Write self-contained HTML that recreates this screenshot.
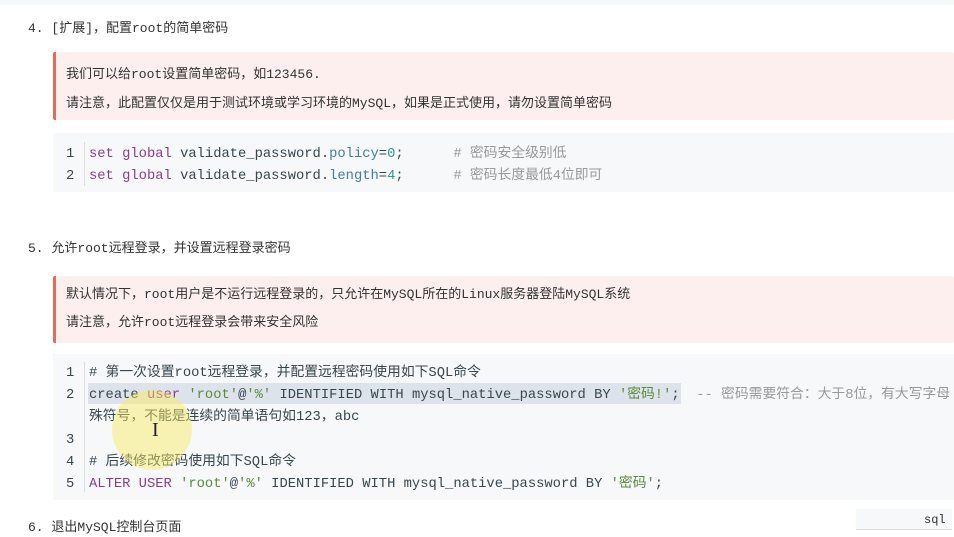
<!DOCTYPE html>
<html><head><meta charset="utf-8"><style>
*{margin:0;padding:0;box-sizing:border-box}
body{width:954px;height:532px;overflow:hidden;background:#fff;position:relative;font-family:"Liberation Mono","Noto Sans CJK SC",monospace;color:#333;font-size:13px}
.a{position:absolute;white-space:pre;line-height:18px;margin-top:3px}
.b{margin-top:0}
.call{position:absolute;left:53px;width:901px;background:#fdefee;border-left:3px solid #e06c5e;border-radius:2px}
.code{position:absolute;left:53px;width:901px;background:#f6f8fa}
.ln{color:#999}
.k{color:#8e3c92}.p{color:#3d7fa8}.n{color:#2a9d8f}.s{color:#5a8a3a}.c{color:#999}.t{color:#37474f}
.cd{font-size:13.8px;color:#37474f}
.sep{position:absolute;left:84px;width:1px;background:#ddd}
</style></head><body>
<div class="a b" style="left:0;top:0;width:954px;height:5px;background:#f7f8fa"></div>
<div class="a" style="left:28px;top:17px">4. [扩展]，配置root的简单密码</div>
<div class="call" style="top:52px;height:68px"></div>
<div class="a" style="left:66px;top:63px">我们可以给root设置简单密码，如123456.</div>
<div class="a" style="left:66px;top:92px">请注意，此配置仅仅是用于测试环境或学习环境的MySQL，如果是正式使用，请勿设置简单密码</div>
<div class="code" style="top:133px;height:59px"></div>
<div class="sep" style="top:142px;height:44px"></div>
<div class="a ln cd" style="left:66px;top:143px">1</div>
<div class="a ln cd" style="left:66px;top:165px">2</div>
<div class="a cd" style="left:89px;top:143px"><span class="k">set global</span> validate_password.<span class="p">policy</span>=<span class="n">0</span>;      <span class="c"># 密码安全级别低</span></div>
<div class="a cd" style="left:89px;top:165px"><span class="k">set global</span> validate_password.<span class="p">length</span>=<span class="n">4</span>;      <span class="c"># 密码长度最低4位即可</span></div>
<div class="a" style="left:28px;top:237px">5. 允许root远程登录，并设置远程登录密码</div>
<div class="call" style="top:276px;height:67px"></div>
<div class="a" style="left:66px;top:283px">默认情况下，root用户是不运行远程登录的，只允许在MySQL所在的Linux服务器登陆MySQL系统</div>
<div class="a" style="left:66px;top:311px">请注意，允许root远程登录会带来安全风险</div>
<div class="code" style="top:354px;height:146px"></div>
<div class="a b" style="left:88px;top:383px;width:593px;height:21px;background:#dde3ea"></div>
<div class="sep" style="top:362px;height:130px"></div>
<div class="a ln cd" style="left:66px;top:362px">1</div>
<div class="a ln cd" style="left:66px;top:384px">2</div>
<div class="a ln cd" style="left:66px;top:429px">3</div>
<div class="a ln cd" style="left:66px;top:451px">4</div>
<div class="a ln cd" style="left:66px;top:473px">5</div>
<div class="a cd c" style="left:89px;top:362px"># 第一次设置root远程登录，并配置远程密码使用如下SQL命令</div>
<div class="a cd" style="left:89px;top:384px"><span class="t">create</span> <span class="k">user</span> <span class="s">'root'</span>@<span class="s">'%'</span> IDENTIFIED WITH mysql_native_password BY <span class="s">'密码!'</span>;  <span class="c">-- 密码需要符合：大于8位，有大写字母</span></div>
<div class="a cd c" style="left:89px;top:406px">殊符号，不能是连续的简单语句如123，abc</div>
<div class="a cd c" style="left:89px;top:451px"># 后续修改密码使用如下SQL命令</div>
<div class="a cd" style="left:89px;top:473px"><span class="k">ALTER USER</span> <span class="s">'root'</span>@<span class="s">'%'</span> IDENTIFIED WITH mysql_native_password BY <span class="s">'密码'</span>;</div>
<div class="a b" style="left:112px;top:390px;width:80px;height:80px;border-radius:50%;background:rgba(250,235,90,0.45)"></div>
<div class="a" style="left:152px;top:418px;font-size:20px;color:#222;font-family:'Liberation Serif',serif">I</div>
<div class="a" style="left:28px;top:516px">6. 退出MySQL控制台页面</div>
<div class="a b" style="left:856px;top:509px;width:96px;height:21px;background:#f6f8fa;border-bottom:1px solid #ddd"></div>
<div class="a" style="left:924px;top:508px;font-size:12px">sql</div>
</body></html>
